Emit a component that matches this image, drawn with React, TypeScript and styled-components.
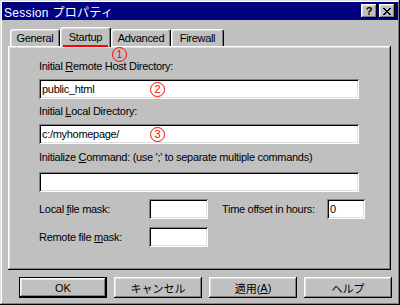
import styled, { createGlobalStyle } from 'styled-components';

const GlobalStyle = createGlobalStyle`
  html, body {
    margin: 0;
    padding: 0;
    background: #c0c0c0;
  }
  body {
    font-family: 'Liberation Sans', 'Noto Sans CJK JP', sans-serif;
    font-size: 11px;
    letter-spacing: -0.3px;
    color: #000;
  }
`;

const raised = `
  box-shadow: inset -1px -1px #000, inset 1px 1px #fff, inset -2px -2px #808080, inset 2px 2px #dfdfdf;
`;

const sunken = `
  box-shadow: inset 1px 1px #808080, inset -1px -1px #fff, inset 2px 2px #000, inset -2px -2px #dfdfdf;
`;

const Window = styled.div`
  box-sizing: border-box;
  width: 400px;
  height: 305px;
  padding: 2px;
  background: #c0c0c0;
  display: flex;
  flex-direction: column;
  box-shadow: inset -1px -1px #000, inset 1px 1px #dfdfdf, inset -2px -2px #808080, inset 2px 2px #fff;
`;

const TitleBar = styled.div`
  height: 18px;
  background: #000080;
  color: #fff;
  display: flex;
  align-items: center;
  justify-content: space-between;
  padding: 0 3px 0 2px;
  font-size: 12px;
`;

const TitleText = styled.span`
  letter-spacing: 0.3px;
`;

const TitleButtons = styled.div`
  display: flex;
  gap: 2px;
`;

const TitleButton = styled.div`
  box-sizing: border-box;
  width: 16px;
  height: 14px;
  background: #c0c0c0;
  color: #000;
  display: flex;
  align-items: center;
  justify-content: center;
  font-weight: bold;
  font-size: 11px;
  ${raised}
`;

const TabRow = styled.div`
  display: flex;
  align-items: flex-end;
  margin-top: 7px;
  padding-left: 8px;
  height: 19px;
  position: relative;
  z-index: 1;
`;

const Tab = styled.div<{ $active?: boolean; $w: number }>`
  box-sizing: border-box;
  width: ${({ $w }) => $w}px;
  height: ${({ $active }) => ($active ? 20 : 17)}px;
  margin-bottom: ${({ $active }) => ($active ? -1 : 0)}px;
  display: flex;
  justify-content: center;
  padding-top: ${({ $active }) => ($active ? 3 : 2)}px;
  background: #c0c0c0;
  border-radius: 3px 3px 0 0;
  border-top: 1px solid #fff;
  border-left: 1px solid #fff;
  border-right: 1px solid #000;
  box-shadow: inset -1px 0 #808080, inset 1px 1px #dfdfdf;
  position: relative;
`;

const TabLabel = styled.span<{ $marked?: boolean }>`
  position: relative;
  height: 13px;
  line-height: 13px;
  ${({ $marked }) =>
    $marked &&
    `
    &::after {
      content: '';
      position: absolute;
      left: -6px;
      right: -6px;
      bottom: -3px;
      height: 2px;
      background: #ff0000;
    }
  `}
`;

const Panel = styled.div`
  box-sizing: border-box;
  height: 224px;
  margin: 0 7px 0 6px;
  padding: 14px 0 0 31px;
  position: relative;
  box-shadow: inset -1px -1px #000, inset 1px 1px #fff, inset -2px -2px #808080, inset 2px 2px #dfdfdf;
  display: flex;
  flex-direction: column;
`;

const Label = styled.div<{ $gap?: number }>`
  height: 13px;
  line-height: 13px;
  margin-top: ${({ $gap }) => $gap ?? 0}px;
  white-space: nowrap;
`;

const U = styled.span`
  text-decoration: underline;
  text-underline-offset: 1px;
`;

const Field = styled.div<{ $w: number; $h?: number; $gap?: number }>`
  box-sizing: border-box;
  position: relative;
  width: ${({ $w }) => $w}px;
  height: ${({ $h }) => $h ?? 20}px;
  margin-top: ${({ $gap }) => $gap ?? 6}px;
  background: #fff;
  padding: 0 3px;
  line-height: ${({ $h }) => $h ?? 20}px;
  ${sunken}
`;

const Badge = styled.span<{ $left: number; $top: number }>`
  position: absolute;
  left: ${({ $left }) => $left}px;
  top: ${({ $top }) => $top}px;
  box-sizing: border-box;
  width: 15px;
  height: 15px;
  border: 1px solid #ff0000;
  border-radius: 50%;
  color: #ff0000;
  font-size: 11px;
  letter-spacing: 0;
  line-height: 13px;
  text-align: center;
`;

const MaskGrid = styled.div`
  display: grid;
  grid-template-columns: 110px 59px 119px 38px;
  row-gap: 8px;
  margin-top: 7px;
  align-items: center;
`;

const GridLabel = styled.div<{ $indent?: number }>`
  line-height: 13px;
  white-space: nowrap;
  padding-left: ${({ $indent }) => $indent ?? 0}px;
`;

const SmallField = styled.div`
  box-sizing: border-box;
  height: 20px;
  background: #fff;
  padding: 0 3px;
  line-height: 20px;
  ${sunken}
`;

const ButtonRow = styled.div`
  display: flex;
  gap: 7px;
  margin-top: 7px;
  padding-left: 17px;
`;

const Button = styled.div<{ $default?: boolean }>`
  box-sizing: border-box;
  width: 88px;
  height: 21px;
  display: flex;
  align-items: center;
  justify-content: center;
  background: #c0c0c0;
  letter-spacing: 0;
  ${({ $default }) =>
    $default
      ? `box-shadow: inset 0 0 0 1px #000, inset -2px -2px #000, inset 2px 2px #fff, inset -3px -3px #808080, inset 3px 3px #dfdfdf;`
      : `box-shadow: inset -1px -1px #000, inset 1px 1px #fff, inset -2px -2px #808080, inset 2px 2px #dfdfdf;`}
`;

const CloseIcon = () => (
  <svg width="8" height="7" viewBox="0 0 8 7" shapeRendering="crispEdges">
    <path d="M0 0h2v1h-2zM6 0h2v1h-2zM1 1h2v1h-2zM5 1h2v1h-2zM2 2h4v1h-4zM3 3h2v1h-2zM2 4h4v1h-4zM1 5h2v1h-2zM5 5h2v1h-2zM0 6h2v1h-2zM6 6h2v1h-2z" fill="#000" />
  </svg>
);

const App = () => {
  return (
    <>
      <GlobalStyle />
      <Window>
        <TitleBar>
          <TitleText>Session プロパティ</TitleText>
          <TitleButtons>
            <TitleButton>?</TitleButton>
            <TitleButton>
              <CloseIcon />
            </TitleButton>
          </TitleButtons>
        </TitleBar>

        <TabRow>
          <Tab $w={50}>
            <TabLabel>General</TabLabel>
          </Tab>
          <Tab $w={51} $active>
            <TabLabel $marked>Startup</TabLabel>
          </Tab>
          <Tab $w={60}>
            <TabLabel>Advanced</TabLabel>
          </Tab>
          <Tab $w={53}>
            <TabLabel>Firewall</TabLabel>
          </Tab>
        </TabRow>

        <Panel>
          <Badge $left={104} $top={1}>1</Badge>
          <Label>
            Initial <U>R</U>emote Host Directory:
          </Label>
          <Field $w={320}>
            public_html
            <Badge $left={111} $top={3}>2</Badge>
          </Field>
          <Label $gap={6}>
            Initial <U>L</U>ocal Directory:
          </Label>
          <Field $w={320}>
            c:/myhomepage/
            <Badge $left={111} $top={3}>3</Badge>
          </Field>
          <Label $gap={7}>
            Initialize <U>C</U>ommand: (use ';' to separate multiple commands)
          </Label>
          <Field $w={320} $gap={8} />

          <MaskGrid>
            <GridLabel>
              Local <U>f</U>ile mask:
            </GridLabel>
            <SmallField />
            <GridLabel $indent={14}>Time offset in hours:</GridLabel>
            <SmallField>0</SmallField>
            <GridLabel>
              Remote file <U>m</U>ask:
            </GridLabel>
            <SmallField />
          </MaskGrid>
        </Panel>

        <ButtonRow>
          <Button $default>OK</Button>
          <Button>キャンセル</Button>
          <Button>
            適用(<U>A</U>)
          </Button>
          <Button>ヘルプ</Button>
        </ButtonRow>
      </Window>
    </>
  );
};

export default App;
